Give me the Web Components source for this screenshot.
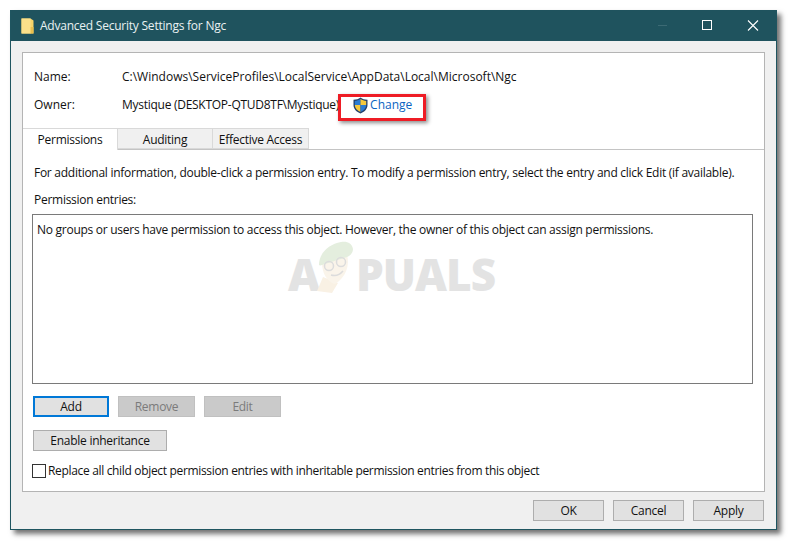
<!DOCTYPE html>
<html><head><meta charset="utf-8"><title>Advanced Security Settings for Ngc</title>
<style>
html,body{margin:0;padding:0;background:#fff;}
body{width:788px;height:541px;overflow:hidden;font:12px/16px "Open Sans","Noto Sans",sans-serif;color:#111;letter-spacing:-.27px;}
</style></head><body>
<sec-dialog heading="Advanced Security Settings for Ngc">
  <info-row label="Name:" style="letter-spacing:0">C:\Windows\ServiceProfiles\LocalService\AppData\Local\Microsoft\Ngc</info-row>
  <info-row label="Owner:" style="margin-top:12px">Mystique (DESKTOP-QTUD8TF\Mystique)<change-link>Change</change-link></info-row>
  <tab-strip></tab-strip>
  <perm-pane></perm-pane>
  <dlg-button slot="footer" w="71">OK</dlg-button>
  <dlg-button slot="footer" w="71">Cancel</dlg-button>
  <dlg-button slot="footer" w="71">Apply</dlg-button>
</sec-dialog>
<script>
function def(name,html,setup){
  customElements.define(name,class extends HTMLElement{
    constructor(){super();this.attachShadow({mode:'open'}).innerHTML=html;}
    connectedCallback(){setup&&setup.call(this,this.shadowRoot);}
  });
}
def('sec-dialog',`<style>
:host{display:flex;flex-direction:column;box-sizing:border-box;width:767px;height:520px;margin:10px 0 0 10px;background:#f0f0f0;border:1px solid #1f5560;border-top:0;box-shadow:4px 4px 5px rgba(0,0,0,.55);position:relative}
.title{flex:none;height:31px;background:#1f535e;color:#e9f1f2;display:flex;align-items:center;font-size:12px;padding-left:10px}
.title span{margin-left:6px;letter-spacing:-.23px;white-space:nowrap}
.ctl{margin-left:auto;display:flex;align-items:center}
.ctl svg{display:block}
.panel{flex:none;box-sizing:border-box;margin:11px 11px 0 11px;height:440px;background:#fff;border:1px solid #b4b4b4;padding:16px 0 0 0;position:relative}
.foot{flex:1;display:flex;justify-content:flex-end;gap:9px;padding:8px 12px 0 0}
</style>
<div class="title">
<svg width="13" height="16" viewBox="0 0 13 16"><path d="M0.5 0.5H9.5L12.5 2.5V15.5H0.5Z" fill="#f7d469"/><path d="M9 9V15.5H12.5V9Z" fill="#eabf4e"/><path d="M0.5 0.5H9.5L9.5 15.5H0.5Z" fill="#fbe08a"/></svg>
<span id="h"></span>
<div class="ctl">
<svg width="46" height="31" viewBox="0 0 46 31"><path d="M20 15.5H29" stroke="#3c6a74" stroke-width="1"/></svg>
<svg width="46" height="31" viewBox="0 0 46 31"><rect x="18.5" y="10.5" width="9" height="9" fill="none" stroke="#fff" stroke-width="1"/></svg>
<svg width="46" height="31" viewBox="0 0 46 31"><path d="M18 10.5L28 20.5M28 10.5L18 20.5" fill="none" stroke="#fff" stroke-width="1.1"/></svg>
</div></div>
<div class="panel"><slot></slot><water-mark></water-mark></div>
<div class="foot"><slot name="footer"></slot></div>`,function(s){s.getElementById('h').textContent=this.getAttribute('heading');});

def('info-row',`<style>
:host{display:flex;height:16px;padding-left:11px;white-space:nowrap}
.l{width:88px;flex:none;letter-spacing:0}
</style><div class="l" id="l"></div><div><slot></slot></div>`,function(s){s.getElementById('l').textContent=this.getAttribute('label');});

def('change-link',`<style>
:host{display:inline-flex;align-items:center;position:relative;margin-left:14px;color:#0a64c2;vertical-align:top;height:16px;letter-spacing:0}
svg{margin-right:2px;display:block}
.mark{position:absolute;left:-15px;top:-3px;width:82px;height:21px;border:3px solid #ee1c25;box-shadow:2px 2px 4px rgba(0,0,0,.45);pointer-events:none}
</style>
<svg width="15" height="17" viewBox="0 0 15 17"><path d="M7.5 .5C9.5 2 11.5 2.7 14.5 2.8V8C14.5 12 11.5 15 7.5 16.5C3.5 15 .5 12 .5 8V2.8C3.5 2.7 5.5 2 7.5 .5Z" fill="#24406b"/><path d="M7.5 2V8H1.8V3.9C4 3.7 5.8 3.2 7.5 2Z" fill="#2b7cd3"/><path d="M7.5 2C9.2 3.2 11 3.7 13.2 3.9V8H7.5Z" fill="#f6c93c"/><path d="M1.8 8H7.5V15C4.3 13.7 1.9 11.3 1.8 8Z" fill="#f6c93c"/><path d="M7.5 8H13.2C13.1 11.3 10.7 13.7 7.5 15Z" fill="#2b7cd3"/></svg>
<slot></slot><div class="mark"></div>`);

def('tab-strip',`<style>
:host{display:flex;margin-top:15px;height:22px;border-bottom:1px solid #c4c4c4;box-sizing:border-box;position:relative;align-items:flex-start}
.t{box-sizing:border-box;height:21px;width:95px;background:#f0f0f0;border:1px solid #d9d9d9;border-left:0;text-align:center;line-height:21px;white-space:nowrap}
.a{background:#fff;height:22px;width:95px;border-bottom:0;z-index:1}
.e{width:96px}
</style><div class="t a">Permissions</div><div class="t">Auditing</div><div class="t e">Effective Access</div>`);

def('perm-pane',`<style>
:host{display:flex;flex-direction:column;padding:15px 0 0 11px;position:relative;z-index:1}
.box{box-sizing:border-box;width:721px;height:170px;margin:6px 0 0 -2px;border:1px solid #7a7a7a;padding:7px 4px;white-space:nowrap}
.row{display:flex;gap:9px;margin:12px 0 0 -1px}
.cb{display:flex;align-items:center;margin:13px 0 0 -2px;height:14px;white-space:nowrap;letter-spacing:-.33px}
.cb i{box-sizing:border-box;display:block;width:14px;height:14px;border:1px solid #333;background:#fff;margin-right:2px}
.p{white-space:nowrap;height:16px}
</style>
<div class="p">For additional information, double-click a permission entry. To modify a permission entry, select the entry and click Edit (if available).</div>
<div class="p" style="margin-top:11px">Permission entries:</div>
<div class="box">No groups or users have permission to access this object. However, the owner of this object can assign permissions.</div>
<div class="row"><dlg-button w="76" focus>Add</dlg-button><dlg-button w="77" off>Remove</dlg-button><dlg-button w="77" off>Edit</dlg-button></div>
<div class="row" style="margin-top:13px"><dlg-button w="134">Enable inheritance</dlg-button></div>
<div class="cb"><i></i>Replace all child object permission entries with inheritable permission entries from this object</div>`);

def('dlg-button',`<style>
:host{display:block;box-sizing:border-box;height:21px;background:#e1e1e1;border:1px solid #adadad;text-align:center;line-height:19px;white-space:nowrap;color:#111}
:host([focus]){border:2px solid #0078d7;line-height:17px}
:host([off]){background:#cacaca;border-color:#c0c0c0;color:#7b7b7b}
</style><slot></slot>`,function(){this.style.width=this.getAttribute('w')+'px';});

def('water-mark',`<style>
:host{position:absolute;left:265px;top:189px;width:210px;height:56px;display:block;pointer-events:none;z-index:0}
.t{position:absolute;font:800 44px/46px "Open Sans",sans-serif;letter-spacing:-1px;color:#e3e3e3;white-space:nowrap;top:9px}
svg{position:absolute;left:29px;top:-1px}
</style>
<span class="t" style="left:0">A</span>
<svg width="36" height="52" viewBox="0 0 36 52"><path d="M6 36L0 50L15 52L21 42Z" fill="#f9f1e4"/><path d="M5 22L30 14C33 24 29 36 18 43C10 41 5 32 5 22Z" fill="#faf4ea"/><path d="M2 24C2 12 12 3 24 1C30 0 35 2 36 8C36 12 33 15 30 16L8 23C5 24 3 25 2 24Z" fill="#e4eede"/><circle cx="12" cy="25" r="4.5" fill="none" stroke="#dcdcdc" stroke-width="1.5"/><circle cx="24" cy="21" r="4.5" fill="none" stroke="#dcdcdc" stroke-width="1.5"/><path d="M14 34Q21 36 26 30" fill="none" stroke="#dcdcdc" stroke-width="1.5"/></svg>
<span class="t" style="left:68px">PUALS</span>`);
</script>
</body></html>
